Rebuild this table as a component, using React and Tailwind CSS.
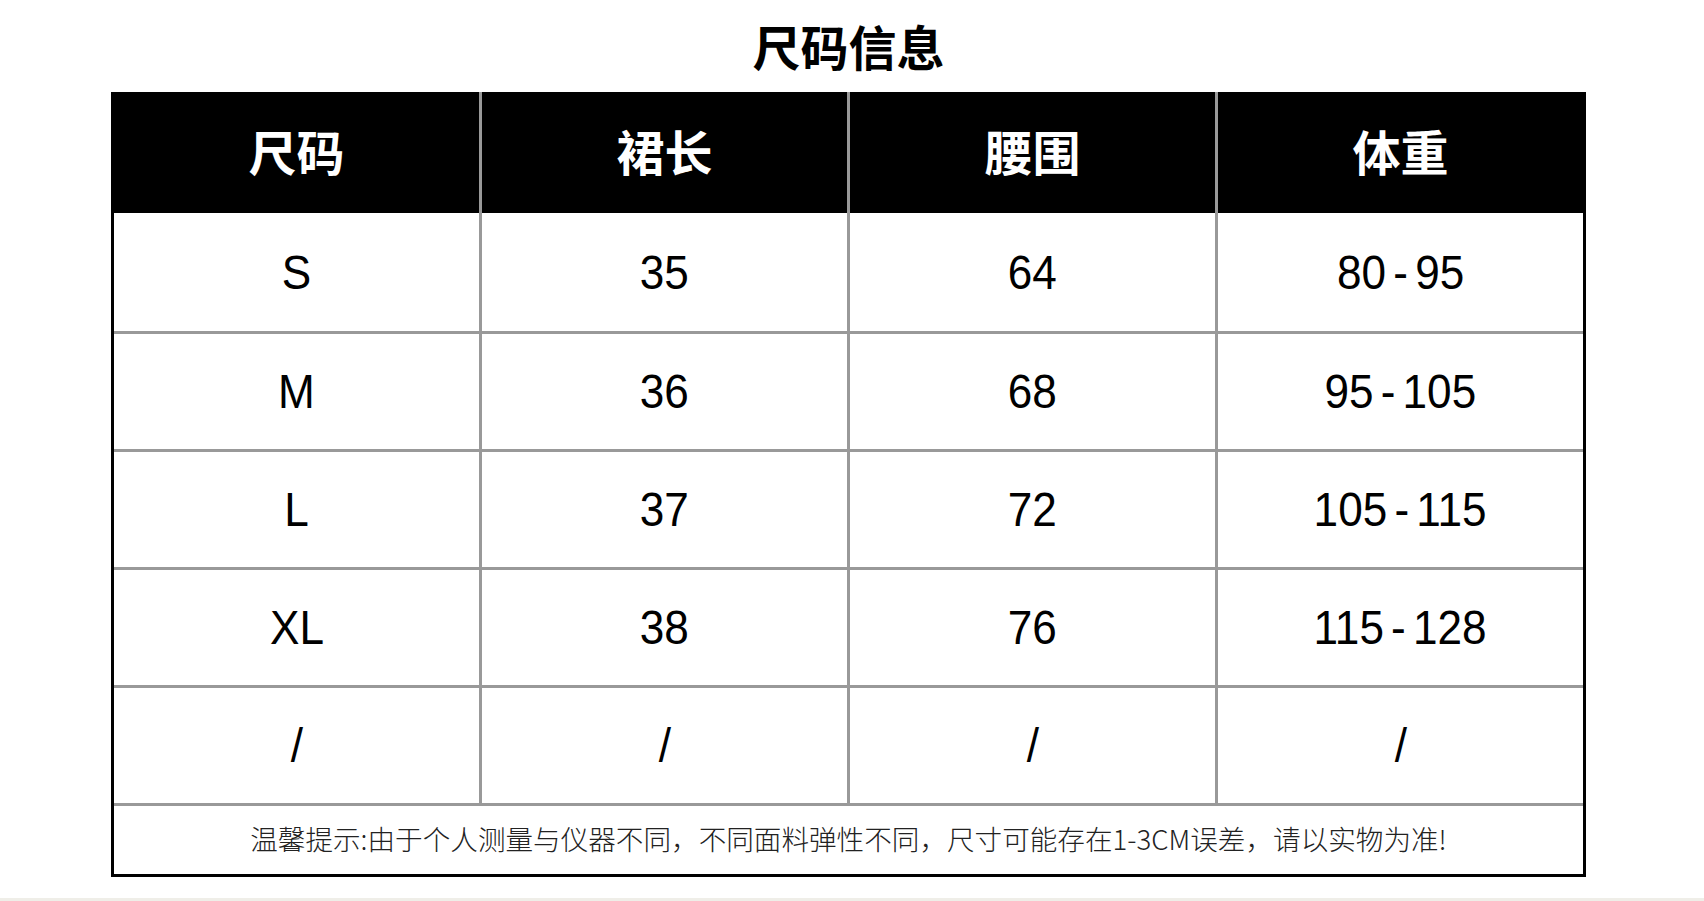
import React from "react";

const columns = ["尺码", "裙长", "腰围", "体重"];

const rows = [
  ["S", "35", "64", "80-95"],
  ["M", "36", "68", "95-105"],
  ["L", "37", "72", "105-115"],
  ["XL", "38", "76", "115-128"],
  ["/", "/", "/", "/"],
];

const numFont = {
  fontFamily: '"Liberation Sans", Arial, sans-serif',
};

// the figures in the original are set in a narrow face; the hyphen gets extra room
const CellText = ({ value }) => {
  const parts = value.split("-");
  return (
    <span className="inline-block scale-x-[0.9] whitespace-nowrap">
      {parts.length === 1 ? (
        value
      ) : (
        <>
          {parts[0]}
          <span className="mx-[8px]">-</span>
          {parts[1]}
        </>
      )}
    </span>
  );
};

const App = () => {
  return (
    <div
      className="flex h-[901px] w-[1704px] flex-col bg-white"
      style={{ fontFamily: '"Noto Sans CJK SC", "Noto Sans", sans-serif' }}
    >
      <div className="ml-[111px] w-[1475px]">
        <div className="flex h-[92px] items-center justify-center pb-[2px]">
          <h1 className="text-[48px] font-bold leading-none text-black">尺码信息</h1>
        </div>

        <div className="box-border border-x-[3px] border-b-[3px] border-black">
          <div className="flex h-[121px] bg-black">
            {columns.map((col, i) => (
              <div
                key={col}
                className={
                  "flex items-center justify-center pb-[6px] text-[48px] font-bold leading-none text-white" +
                  (i > 0 ? " w-[368px] border-l-[3px] border-[#999999]" : " w-[365px]")
                }
              >
                {col}
              </div>
            ))}
          </div>

          {rows.map((row, r) => (
            <div
              key={r}
              className={
                "box-border flex h-[118px]" + (r > 0 ? " border-t-[3px] border-[#999999]" : "")
              }
            >
              {row.map((cell, i) => (
                <div
                  key={i}
                  className={
                    "flex items-center justify-center text-[49px] leading-none text-black" +
                    (i > 0 ? " w-[368px] border-l-[3px] border-[#999999]" : " w-[365px]")
                  }
                  style={numFont}
                >
                  <CellText value={cell} />
                </div>
              ))}
            </div>
          ))}

          <div className="box-border flex h-[71px] items-center justify-center border-t-[3px] border-[#999999] pb-[2px] text-[27.6px] font-light leading-none text-[#222222]">
            温馨提示:由于个人测量与仪器不同，不同面料弹性不同，尺寸可能存在1-3CM误差，请以实物为准!
          </div>
        </div>
      </div>

      <div className="flex-1" />
      <div className="h-[3px] bg-[#efeee8]" />
    </div>
  );
};

export default App;
